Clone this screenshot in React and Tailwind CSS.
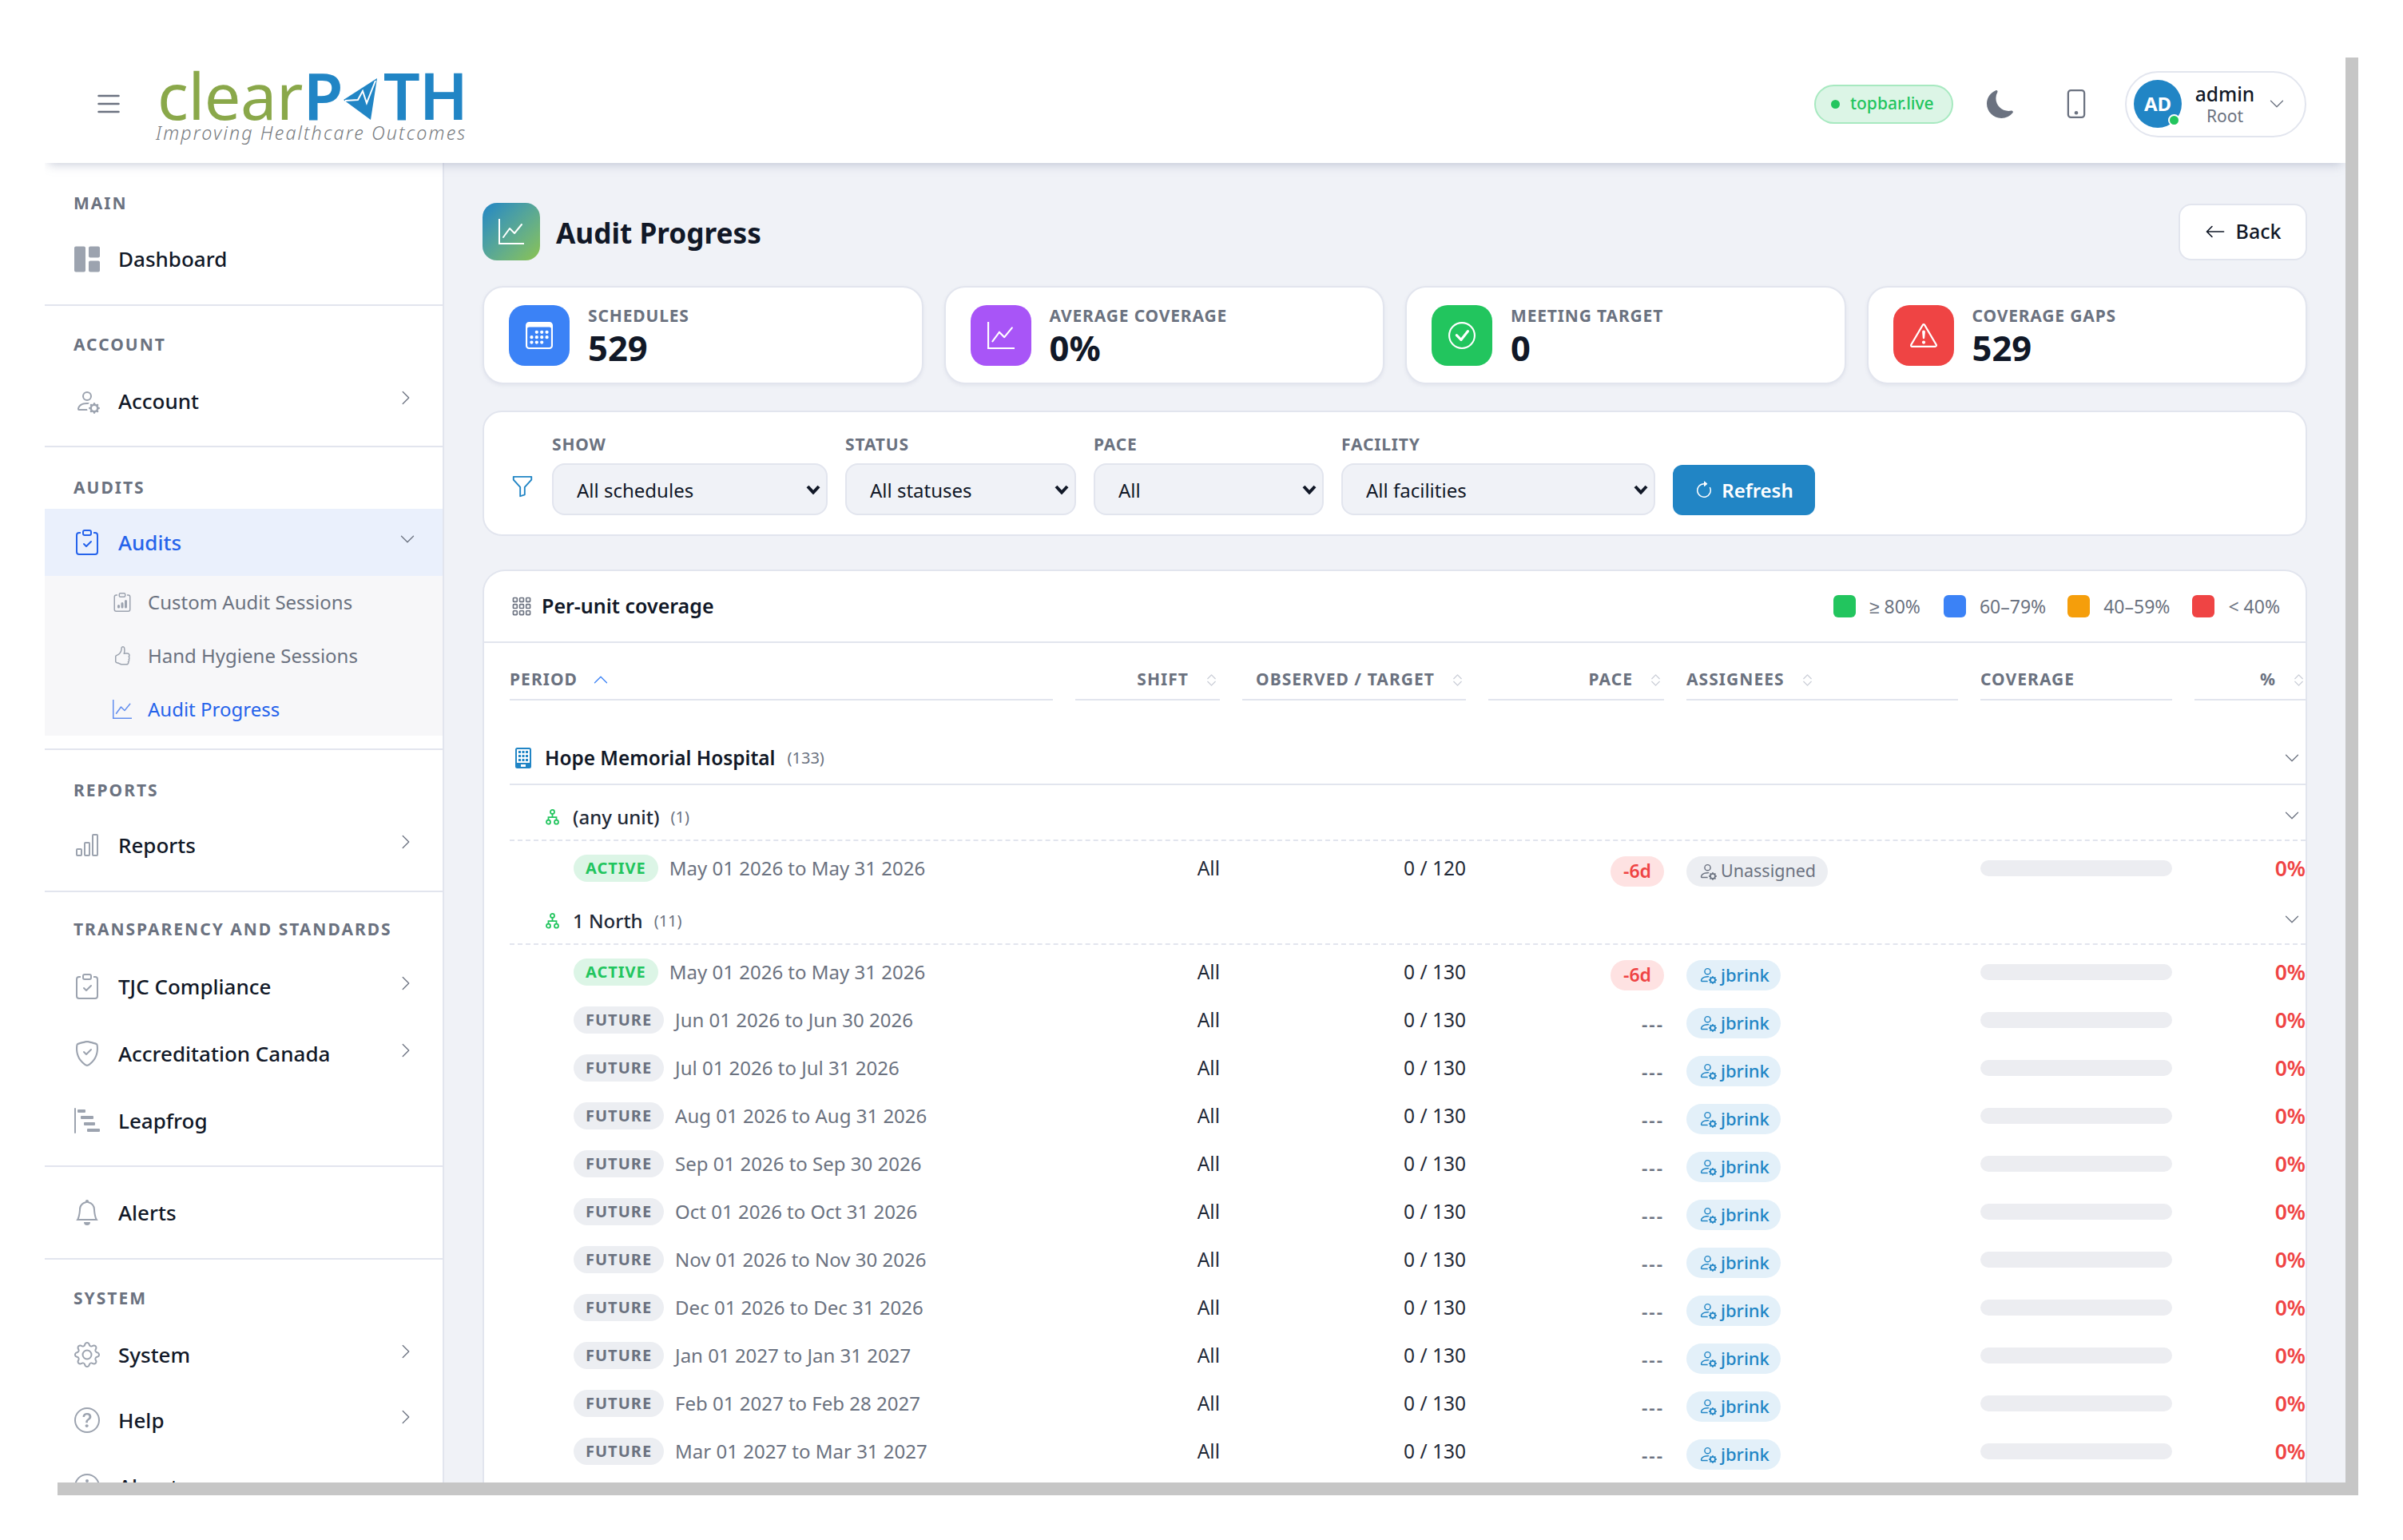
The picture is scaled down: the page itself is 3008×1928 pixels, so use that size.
import React from "react";
import {
  BsList, BsMoonFill, BsPhone, BsChevronDown, BsChevronRight, BsChevronUp, BsChevronExpand, BsGrid1X2Fill, BsPersonGear,
  BsClipboardCheck, BsClipboardData, BsHandThumbsUp, BsGraphUp, BsBarChart, BsShieldCheck, BsBarChartSteps, BsBell, BsGear,
  BsQuestionCircle, BsInfoCircle, BsArrowLeft, BsCalendar3, BsCheckCircle, BsExclamationTriangle, BsFunnel, BsArrowClockwise,
  BsGrid3X3Gap,
} from "react-icons/bs";

const COLS = "grid grid-cols-[680px_181px_280px_220px_340px_240px_141px] gap-x-[28px]";

function Label({ children, cls }) {
  return <div className={"h-[36px] pl-[36px] flex items-center text-[21px] font-bold tracking-[0.095em] text-[#6b7280] " + cls}>{children}</div>;
}

function Row({ icon: Icon, children, chevron, size = 32, cls = "" }) {
  return (
    <div className={"h-[84px] pl-[37px] pr-[36px] flex items-center " + cls}>
      <span className="w-[32px] flex justify-center text-[#9ca3af]"><Icon size={size} /></span>
      <span className="ml-[23px] text-[26px] font-medium text-[#111827] leading-none">{children}</span>
      {chevron && <BsChevronRight size={20} className="ml-auto -mt-[8px] text-[#6b7280]" />}
    </div>
  );
}

function Section({ cls, children, last }) {
  return <div className={(last ? "" : "border-b-2 border-[#e2e5ee] ") + cls}>{children}</div>;
}

function Sidebar() {
  return (
    <aside className="w-[500px] shrink-0 bg-white border-r-2 border-[#e2e5ee] overflow-hidden">
      <Section cls="pt-[33px] pb-[15px]">
        <Label cls="mb-[9px]">MAIN</Label>
        <Row icon={BsGrid1X2Fill} size={33}>Dashboard</Row>
      </Section>
      <Section cls="pt-[31px] pb-[14px]">
        <Label cls="mb-[10px]">ACCOUNT</Label>
        <Row icon={BsPersonGear} chevron>Account</Row>
      </Section>
      <Section cls="pt-[33px] pb-[16px]">
        <Label cls="mb-[8px]">AUDITS</Label>
        <div className="h-[84px] pl-[37px] pr-[34px] flex items-center bg-[#eaf0fc]">
          <span className="w-[32px] flex justify-center text-[#2563eb]"><BsClipboardCheck size={32} /></span>
          <span className="ml-[23px] text-[26px] font-medium text-[#2563eb] leading-none">Audits</span>
          <BsChevronDown size={20} className="ml-auto -mt-[8px] text-[#6b7280]" />
        </div>
        <div className="bg-[#f7f7f9] h-[200px] pl-[85px]">
          <SubItem icon={BsClipboardData}>Custom Audit Sessions</SubItem>
          <SubItem icon={BsHandThumbsUp}>Hand Hygiene Sessions</SubItem>
          <SubItem icon={BsGraphUp} active>Audit Progress</SubItem>
        </div>
      </Section>
      <Section cls="pt-[33px] pb-[14px]">
        <Label cls="mb-[8px]">REPORTS</Label>
        <Row icon={BsBarChart} chevron cls="mb-[1px]">Reports</Row>
      </Section>
      <Section cls="pt-[29px] pb-[14px]">
        <Label cls="mb-[11px]">TRANSPARENCY AND STANDARDS</Label>
        <Row icon={BsClipboardCheck} chevron>TJC Compliance</Row>
        <Row icon={BsShieldCheck} chevron>Accreditation Canada</Row>
        <Row icon={BsBarChartSteps}>Leapfrog</Row>
      </Section>
      <Section cls="pt-[15px] pb-[15px]">
        <Row icon={BsBell}>Alerts</Row>
      </Section>
      <Section last cls="pt-[31px]">
        <Label cls="mb-[10px]">SYSTEM</Label>
        <Row icon={BsGear} chevron>System</Row>
        <Row icon={BsQuestionCircle} chevron cls="-mt-[2px]">Help</Row>
        <Row icon={BsInfoCircle} cls="-mt-[1px]">About</Row>
      </Section>
    </aside>
  );
}

function SubItem({ icon: Icon, children, active }) {
  return (
    <div className="h-[66.67px] flex items-center">
      <Icon size={24} className={active ? "text-[#2563eb] opacity-70" : "text-[#9ca3af]"} />
      <span className={"ml-[20px] text-[24px] leading-none " + (active ? "text-[#2563eb]" : "text-[#6b7280]")}>{children}</span>
    </div>
  );
}

function Logo() {
  return (
    <div className="ml-[39px] w-[400px] pt-[3px] flex flex-col">
      <div className="flex items-end h-[70px] pl-[2px] leading-none">
        <span className="text-[81px] leading-[70px] tracking-[-0.5px] text-[#8aa84a]">clear</span>
        <span className="ml-[1px] text-[81px] leading-[70px] font-semibold text-[#2185c5]">P</span>
        <svg width="48" height="56" viewBox="0 0 48 56" className="mb-[2px] -ml-[2px] shrink-0">
          <polygon points="2,29 44,2 36,54" fill="#2185c5" />
          <polyline points="4,30 20,29 26,18 31,33 42,5" fill="none" stroke="#fff" strokeWidth="2" />
        </svg>
        <span className="ml-[4px] text-[81px] leading-[70px] font-semibold tracking-[-1px] text-[#2185c5]">TH</span>
      </div>
      <div className="-mt-[2px] text-[23.3px] leading-[28px] italic font-light tracking-[0.09em] text-[#777b80] whitespace-nowrap">Improving Healthcare Outcomes</div>
    </div>
  );
}

function Topbar() {
  return (
    <header className="relative z-10 h-[148px] shrink-0 bg-white flex items-center pl-[60px] pr-[49px] shadow-[0_7px_12px_-5px_rgba(120,130,160,0.4)] [clip-path:inset(0_0_-30px_0)]">
      <BsList size={40} className="text-[#6b7280]" />
      <Logo />
      <div className="ml-auto flex items-center">
        <div className="h-[49px] w-[174px] rounded-full border-2 border-[#a7e9c0] bg-[#dcf5e6] flex items-center pl-[19px]">
          <span className="w-[11px] h-[11px] rounded-full bg-[#22c55e]" />
          <span className="ml-[13px] text-[21px] font-medium text-[#22c55e]">topbar.live</span>
        </div>
        <BsMoonFill size={35} className="ml-[42px] text-[#6b7280]" />
        <BsPhone size={36} className="ml-[59px] text-[#6b7280]" />
        <div className="ml-[43px] w-[227px] h-[83px] rounded-full border-2 border-[#e2e5ee] flex items-center pl-[9px]">
          <div className="relative w-[60px] h-[60px] rounded-full bg-[#2185c5] flex items-center justify-center text-white font-bold text-[24px]">
            AD
            <span className="absolute right-[2px] bottom-[2px] w-[15px] h-[15px] rounded-full bg-[#22c55e] border-2 border-white" />
          </div>
          <div className="ml-[17px] w-[74px] flex flex-col items-center">
            <span className="text-[24.5px] leading-[30px] font-medium text-[#111827]">admin</span>
            <span className="text-[21px] leading-[24px] text-[#6b7280]">Root</span>
          </div>
          <BsChevronDown size={20} className="ml-[18px] text-[#6b7280]" />
        </div>
      </div>
    </header>
  );
}

function Stat({ icon: Icon, color, label, value }) {
  return (
    <div className="h-[123px] rounded-[26px] bg-white border-2 border-[#e2e5ee] shadow-[0_2px_4px_rgba(120,130,160,0.1)] flex items-center pl-[31px]">
      <div className={"w-[76px] h-[76px] rounded-[20px] flex items-center justify-center text-white " + color}>
        <Icon size={34} />
      </div>
      <div className="ml-[23px] -mt-[4px] flex flex-col">
        <span className="text-[21px] leading-[30px] mb-[4px] font-bold tracking-[0.04em] text-[#6b7280]">{label}</span>
        <span className="text-[43.5px] leading-[42px] font-bold text-[#111827]">{value}</span>
      </div>
    </div>
  );
}

function Filter({ label, width, options }) {
  return (
    <div className={"flex flex-col " + width}>
      <span className="h-[30px] mb-[8px] flex items-center text-[21px] font-bold tracking-[0.04em] text-[#6b7280]">{label}</span>
      <div className="relative">
        <select className="appearance-none h-[65px] w-full rounded-[16px] border-2 border-[#e2e5ee] bg-[#f0f2f7] pl-[29px] pt-[2px] pr-[30px] text-[24px] text-[#111827]">
          {options.map((o) => <option key={o}>{o}</option>)}
        </select>
        <svg width="18" height="12" viewBox="0 0 18 12" className="absolute right-[9px] top-[27px] pointer-events-none">
          <polyline points="2,2 9,9.5 16,2" fill="none" stroke="#111827" strokeWidth="4" />
        </svg>
      </div>
    </div>
  );
}

function Head({ children, right, icon = true }) {
  return (
    <div className={"h-[72px] border-b-2 border-[#e2e5ee] flex items-end pb-[9px] " + (right ? "justify-end pr-[1px]" : "")}>
      <div className="h-[30px] flex items-center">
        <span className="text-[21px] font-bold tracking-[0.05em] text-[#6b7280] whitespace-nowrap">{children}</span>
        {icon && <BsChevronExpand size={19} className="ml-[19px] text-[#c9cdd6]" />}
      </div>
    </div>
  );
}

function Legend({ color, label, cls }) {
  return (
    <div className={"flex items-center " + cls}>
      <span className={"w-[28px] h-[28px] rounded-[6px] " + color} />
      <span className="ml-[17px] text-[23px] text-[#6b7280]">{label}</span>
    </div>
  );
}

function UnitIcon() {
  return (
    <svg width="17" height="20" viewBox="0 0 17 20" fill="none" stroke="#22c55e" strokeWidth="1.8" className="shrink-0">
      <circle cx="8.5" cy="3.4" r="2.5" />
      <path d="M8.5 6v4M3.5 13.5V10.2h10v3.3" />
      <circle cx="3.5" cy="16.2" r="2.5" />
      <circle cx="13.5" cy="16.2" r="2.5" />
    </svg>
  );
}

function DataRow({ status, period, target, pace, who }) {
  const active = status === "ACTIVE";
  return (
    <div className={COLS + " h-[60px] text-[24px]"}>
      <div className="flex items-center pl-[80px] pt-[8px]">
        <span className={"h-[34px] px-[15px] rounded-full flex items-center text-[20px] font-bold tracking-[0.05em] " + (active ? "bg-[#dcf5e6] text-[#22c55e]" : "bg-[#eceef2] text-[#6b7280]")}>{status}</span>
        <span className="ml-[14px] text-[#6b7280] whitespace-nowrap">{period}</span>
      </div>
      <div className="flex items-center justify-end pt-[8px] text-[24.5px] text-[#1f2937]">All</div>
      <div className="flex items-center justify-end pt-[8px] text-[24.5px] text-[#1f2937]">{target}</div>
      <div className="flex items-center justify-end pt-[15px]">
        {pace ? (
          <span className="h-[38px] w-[67px] rounded-full bg-[#fee2e2] text-[#ef4444] flex items-center justify-center text-[23px] font-semibold">-6d</span>
        ) : (
          <span className="mt-[3px] text-[#6b7280] font-semibold text-[23px] tracking-[2px]">---</span>
        )}
      </div>
      <div className="flex items-center pt-[15px]">
        {who ? (
          <span className="h-[38px] w-[118px] pl-[15px] rounded-full bg-[#e3f0f9] text-[#2185c5] flex items-center text-[22px] font-medium">
            <BsPersonGear size={23} className="mr-[5px]" />jbrink
          </span>
        ) : (
          <span className="h-[38px] w-[177px] pl-[15px] rounded-full bg-[#eceef2] text-[#6b7280] flex items-center text-[21.5px]">
            <BsPersonGear size={23} className="mr-[5px]" />Unassigned
          </span>
        )}
      </div>
      <div className="flex items-center pt-[8px]">
        <div className="w-full h-[20px] rounded-full bg-[#ecedf1]" />
      </div>
      <div className="flex items-center justify-end pr-[2px] pt-[10px] text-[26.5px] font-semibold text-[#ef4444]">0%</div>
    </div>
  );
}

function UnitRow({ name, count }) {
  return (
    <div className="h-[70px] border-b-2 border-dashed border-[#e2e5ee] pt-[12px] pl-[45px] pr-[7px] flex items-center">
      <UnitIcon />
      <span className="ml-[17px] text-[24px] font-medium text-[#1f2937]">{name}</span>
      <span className="ml-[14px] text-[20px] text-[#6b7280]">{count}</span>
      <BsChevronDown size={20} className="ml-auto -mt-[4px] text-[#6b7280]" />
    </div>
  );
}

function HospitalIcon() {
  return (
    <svg width="20" height="26" viewBox="0 0 20 26" className="text-[#2185c5] shrink-0">
      <rect x="1" y="1" width="18" height="24" rx="1.5" fill="none" stroke="currentColor" strokeWidth="2" />
      <g fill="currentColor">
        <rect x="4" y="4" width="3" height="3" /><rect x="8.5" y="4" width="3" height="3" /><rect x="13" y="4" width="3" height="3" />
        <rect x="4" y="9" width="3" height="3" /><rect x="8.5" y="9" width="3" height="3" /><rect x="13" y="9" width="3" height="3" />
        <rect x="4" y="14" width="3" height="3" /><rect x="8.5" y="14" width="3" height="3" /><rect x="13" y="14" width="3" height="3" />
        <path d="M1 19h18v6H13v-4H7v4H1z" />
      </g>
    </svg>
  );
}

const FUTURE = [
  "Jun 01 2026 to Jun 30 2026", "Jul 01 2026 to Jul 31 2026", "Aug 01 2026 to Aug 31 2026", "Sep 01 2026 to Sep 30 2026",
  "Oct 01 2026 to Oct 31 2026", "Nov 01 2026 to Nov 30 2026", "Dec 01 2026 to Dec 31 2026", "Jan 01 2027 to Jan 31 2027",
  "Feb 01 2027 to Feb 28 2027", "Mar 01 2027 to Mar 31 2027",
];

function TableCard() {
  return (
    <div className="mt-[42px] pb-[60px] rounded-t-[28px] bg-white border-2 border-b-0 border-[#e2e5ee] pl-[32px] overflow-hidden">
      <div className="-ml-[32px] h-[90px] border-b-2 border-[#e2e5ee] flex items-center pl-[34px] pr-[32px]">
        <BsGrid3X3Gap size={26} className="text-[#6b7280]" />
        <span className="ml-[12px] text-[25px] font-semibold text-[#111827]">Per-unit coverage</span>
        <div className="ml-auto flex items-center">
          <Legend color="bg-[#22c55e]" label="≥ 80%" />
          <Legend color="bg-[#3b82f6]" label="60–79%" cls="ml-[29px]" />
          <Legend color="bg-[#f59e0b]" label="40–59%" cls="ml-[27px]" />
          <Legend color="bg-[#ef4444]" label="< 40%" cls="ml-[28px]" />
        </div>
      </div>
      <div className={COLS}>
        <div className="h-[72px] border-b-2 border-[#e2e5ee] flex items-end pb-[9px]">
          <div className="h-[30px] flex items-center">
            <span className="text-[21px] font-bold tracking-[0.05em] text-[#6b7280]">PERIOD</span>
            <BsChevronUp size={20} className="ml-[19px] text-[#3b82f6]" />
          </div>
        </div>
        <Head right>SHIFT</Head>
        <Head right>OBSERVED / TARGET</Head>
        <Head right>PACE</Head>
        <Head>ASSIGNEES</Head>
        <Head icon={false}>COVERAGE</Head>
        <Head right>%</Head>
      </div>
      <div className="mt-[40px] h-[66px] border-b-2 border-[#e2e5ee] flex items-center pl-[7px] pr-[7px]">
        <HospitalIcon />
        <span className="ml-[17px] text-[24.4px] font-semibold text-[#111827]">Hope Memorial Hospital</span>
        <span className="ml-[15px] text-[20px] text-[#6b7280]">(133)</span>
        <BsChevronDown size={20} className="ml-auto text-[#6b7280]" />
      </div>
      <UnitRow name="(any unit)" count="(1)" />
      <DataRow status="ACTIVE" period="May 01 2026 to May 31 2026" target="0 / 120" pace />
      <UnitRow name="1 North" count="(11)" />
      <DataRow status="ACTIVE" period="May 01 2026 to May 31 2026" target="0 / 130" pace who />
      {FUTURE.map((p) => (
        <DataRow key={p} status="FUTURE" period={p} target="0 / 130" who />
      ))}
    </div>
  );
}

function Main() {
  return (
    <main className="flex-1 min-w-0 bg-[#f0f2f7] px-[48px] pt-[50px] overflow-hidden">
      <div className="flex items-center h-[72px]">
        <div className="w-[72px] h-[72px] rounded-[18px] bg-gradient-to-br from-[#2185c5] to-[#8bc34a] flex items-center justify-center text-white">
          <BsGraphUp size={32} />
        </div>
        <h1 className="ml-[20px] mt-[2px] text-[35.2px] font-bold text-[#111827]">Audit Progress</h1>
        <button className="ml-auto w-[161px] h-[71px] rounded-[16px] bg-white border-2 border-[#e2e5ee] flex items-center justify-center text-[25px] font-medium text-[#111827]">
          <BsArrowLeft size={26} className="mr-[13px]" />Back
        </button>
      </div>
      <div className="mt-[32px] grid grid-cols-4 gap-x-[26px]">
        <Stat icon={BsCalendar3} color="bg-[#3b82f6]" label="SCHEDULES" value="529" />
        <Stat icon={BsGraphUp} color="bg-[#a855f7]" label="AVERAGE COVERAGE" value="0%" />
        <Stat icon={BsCheckCircle} color="bg-[#22c55e]" label="MEETING TARGET" value="0" />
        <Stat icon={BsExclamationTriangle} color="bg-[#ef4444]" label="COVERAGE GAPS" value="529" />
      </div>
      <div className="mt-[33px] h-[157px] rounded-[24px] bg-white border-2 border-[#e2e5ee] flex items-end pb-[24px] pl-[33px]">
        <BsFunnel size={30} className="mb-[21px] text-[#2185c5]" />
        <div className="ml-[22px] flex items-end gap-x-[22px]">
          <Filter label="SHOW" width="w-[345px]" options={["All schedules"]} />
          <Filter label="STATUS" width="w-[289px]" options={["All statuses"]} />
          <Filter label="PACE" width="w-[288px]" options={["All"]} />
          <Filter label="FACILITY" width="w-[393px]" options={["All facilities"]} />
          <button className="w-[178px] h-[63px] rounded-[12px] bg-[#2185c5] flex items-center justify-center text-white text-[24px] font-semibold">
            <BsArrowClockwise size={24} className="mr-[10px]" />Refresh
          </button>
        </div>
      </div>
      <TableCard />
    </main>
  );
}

export default function App() {
  return (
    <div className="w-[3008px] h-[1928px] bg-white p-[56px] overflow-hidden [font-family:'Noto_Sans',sans-serif]">
      <div className="w-[2880px] h-[1800px] bg-white flex flex-col shadow-[16px_16px_0_#c6c6c6]">
        <Topbar />
        <div className="flex flex-1 min-h-0 overflow-hidden">
          <Sidebar />
          <Main />
        </div>
      </div>
    </div>
  );
}
